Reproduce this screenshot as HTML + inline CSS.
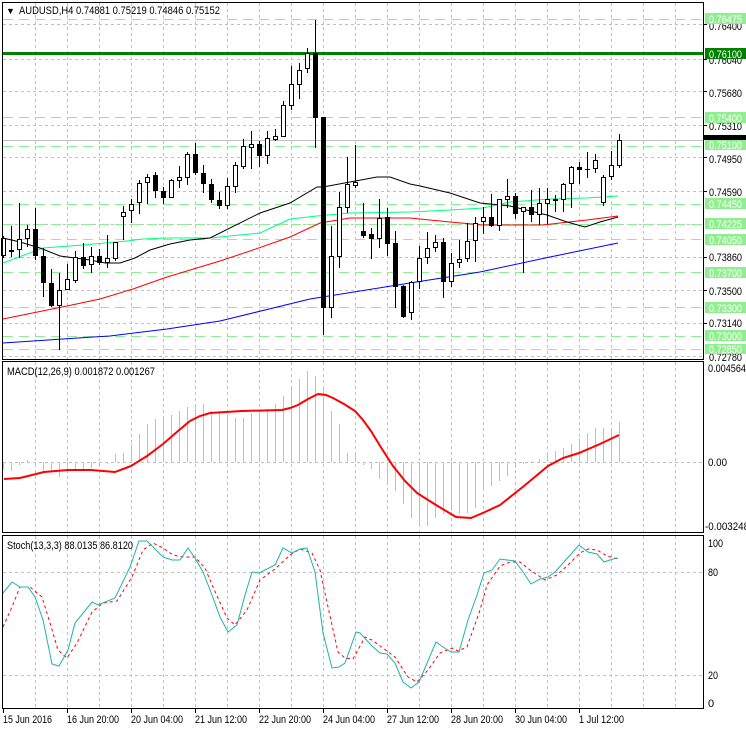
<!DOCTYPE html>
<html><head><meta charset="utf-8"><style>
html,body{margin:0;padding:0;background:#fff;}
svg{display:block;font-family:"Liberation Sans",Tahoma,sans-serif;font-size:11px;}
</style></head><body>
<svg width="746" height="731" viewBox="0 0 746 731" xmlns="http://www.w3.org/2000/svg" shape-rendering="crispEdges">
<rect width="746" height="731" fill="#fff"/>
<g stroke="#c0c0c0" stroke-dasharray="3,3" stroke-width="1">
<path d="M35.5 3V359M67.5 3V359M99.5 3V359M131.5 3V359M163.5 3V359M195.5 3V359M227.5 3V359M259.5 3V359M291.5 3V359M323.5 3V359M355.5 3V359M387.5 3V359M419.5 3V359M451.5 3V359M483.5 3V359M515.5 3V359M547.5 3V359M579.5 3V359M611.5 3V359M643.5 3V359M675.5 3V359"/>
<path d="M35.5 362V532M67.5 362V532M99.5 362V532M131.5 362V532M163.5 362V532M195.5 362V532M227.5 362V532M259.5 362V532M291.5 362V532M323.5 362V532M355.5 362V532M387.5 362V532M419.5 362V532M451.5 362V532M483.5 362V532M515.5 362V532M547.5 362V532M579.5 362V532M611.5 362V532M643.5 362V532M675.5 362V532"/>
<path d="M35.5 536V708M67.5 536V708M99.5 536V708M131.5 536V708M163.5 536V708M195.5 536V708M227.5 536V708M259.5 536V708M291.5 536V708M323.5 536V708M355.5 536V708M387.5 536V708M419.5 536V708M451.5 536V708M483.5 536V708M515.5 536V708M547.5 536V708M579.5 536V708M611.5 536V708M643.5 536V708M675.5 536V708"/>
<path d="M3 24.5H703M3 59.5H703M3 91.5H703M3 125.5H703M3 157.5H703M3 191.5H703M3 224.5H703M3 257.5H703M3 290.5H703M3 323.5H703M3 356.5H703"/>
<path d="M3 462.5H703M3 572.5H703M3 675.5H703"/>
</g>
<g stroke="#90ee90" stroke-dasharray="10,6" stroke-width="1">
<path d="M3 19.5H703M3 117.5H703M3 146.5H703M3 204.5H703M3 224.5H703M3 239.5H703M3 272.5H703M3 307.5H703M3 336.5H703M3 349.5H703"/>
</g>
<rect x="3" y="52" width="700" height="3" fill="#008000"/>
<rect x="3" y="140" width="700" height="1" fill="#c0c0c0"/>
<g fill="none" stroke-width="1" shape-rendering="auto">
<polyline stroke="#0000ff" points="3,343 93,337 110,336 167,329 220,321 310,299 410,283 480,272 550,257 618,243"/>
<polyline stroke="#ff0000" points="3,319 67,306 100,299 133,289 167,277 220,261 250,251 290,237 320,223 350,218 410,218 450,222 483,225 543,225 560,223 587,220 618,216"/>
<polyline stroke="#00ff7f" points="3,263 43,248 83,245 127,241 143,239 167,238 210,238 260,233 290,219 317,216 350,213 410,212 450,210 483,208 510,202 550,199 587,198 618,196"/>
<polyline stroke="#000" points="3,238 20,242 40,248 60,256 75,258 90,260 105,263 120,263 135,258 150,250 170,244 190,240 210,238 260,213 290,203 317,187 323,187 350,182 377,177 390,177 410,184 420,186 450,193 480,203 510,206 547,215 567,222 585,227 600,222 618,217"/>
</g>
<g fill="#000">
<rect x="3" y="236" width="1" height="22"/><rect x="1" y="238" width="5" height="18"/><rect x="2" y="239" width="3" height="16" fill="#fff"/>
<rect x="11" y="226" width="1" height="31"/><rect x="9" y="250" width="5" height="2"/>
<rect x="19" y="203" width="1" height="55"/><rect x="17" y="239" width="5" height="11"/><rect x="18" y="240" width="3" height="9" fill="#fff"/>
<rect x="27" y="225" width="1" height="22"/><rect x="25" y="229" width="5" height="10"/><rect x="26" y="230" width="3" height="8" fill="#fff"/>
<rect x="35" y="208" width="1" height="52"/><rect x="33" y="229" width="5" height="27"/>
<rect x="43" y="248" width="1" height="49"/><rect x="41" y="256" width="5" height="27"/>
<rect x="51" y="269" width="1" height="38"/><rect x="49" y="283" width="5" height="23"/>
<rect x="59" y="273" width="1" height="77"/><rect x="57" y="290" width="5" height="16"/><rect x="58" y="291" width="3" height="14" fill="#fff"/>
<rect x="67" y="264" width="1" height="26"/><rect x="65" y="279" width="5" height="11"/><rect x="66" y="280" width="3" height="9" fill="#fff"/>
<rect x="75" y="251" width="1" height="32"/><rect x="73" y="257" width="5" height="24"/><rect x="74" y="258" width="3" height="22" fill="#fff"/>
<rect x="83" y="243" width="1" height="26"/><rect x="81" y="257" width="5" height="9"/>
<rect x="91" y="247" width="1" height="26"/><rect x="89" y="256" width="5" height="9"/><rect x="90" y="257" width="3" height="7" fill="#fff"/>
<rect x="99" y="249" width="1" height="16"/><rect x="97" y="256" width="5" height="7"/>
<rect x="107" y="235" width="1" height="33"/><rect x="105" y="258" width="5" height="5"/><rect x="106" y="259" width="3" height="3" fill="#fff"/>
<rect x="115" y="242" width="1" height="19"/><rect x="113" y="242" width="5" height="17"/><rect x="114" y="243" width="3" height="15" fill="#fff"/>
<rect x="123" y="206" width="1" height="34"/><rect x="121" y="212" width="5" height="5"/><rect x="122" y="213" width="3" height="3" fill="#fff"/>
<rect x="131" y="199" width="1" height="24"/><rect x="129" y="204" width="5" height="7"/><rect x="130" y="205" width="3" height="5" fill="#fff"/>
<rect x="139" y="180" width="1" height="34"/><rect x="137" y="183" width="5" height="20"/><rect x="138" y="184" width="3" height="18" fill="#fff"/>
<rect x="147" y="174" width="1" height="30"/><rect x="145" y="177" width="5" height="6"/><rect x="146" y="178" width="3" height="4" fill="#fff"/>
<rect x="155" y="172" width="1" height="26"/><rect x="153" y="175" width="5" height="16"/>
<rect x="163" y="187" width="1" height="17"/><rect x="161" y="191" width="5" height="7"/>
<rect x="171" y="179" width="1" height="19"/><rect x="169" y="180" width="5" height="18"/><rect x="170" y="181" width="3" height="16" fill="#fff"/>
<rect x="179" y="166" width="1" height="22"/><rect x="177" y="177" width="5" height="4"/><rect x="178" y="178" width="3" height="2" fill="#fff"/>
<rect x="187" y="152" width="1" height="33"/><rect x="185" y="154" width="5" height="24"/><rect x="186" y="155" width="3" height="22" fill="#fff"/>
<rect x="195" y="143" width="1" height="32"/><rect x="193" y="154" width="5" height="19"/>
<rect x="203" y="165" width="1" height="28"/><rect x="201" y="173" width="5" height="11"/>
<rect x="211" y="179" width="1" height="24"/><rect x="209" y="184" width="5" height="16"/>
<rect x="219" y="192" width="1" height="17"/><rect x="217" y="200" width="5" height="6"/>
<rect x="227" y="178" width="1" height="31"/><rect x="225" y="186" width="5" height="20"/><rect x="226" y="187" width="3" height="18" fill="#fff"/>
<rect x="235" y="162" width="1" height="31"/><rect x="233" y="165" width="5" height="22"/><rect x="234" y="166" width="3" height="20" fill="#fff"/>
<rect x="243" y="139" width="1" height="30"/><rect x="241" y="146" width="5" height="21"/><rect x="242" y="147" width="3" height="19" fill="#fff"/>
<rect x="251" y="131" width="1" height="38"/><rect x="249" y="144" width="5" height="4"/><rect x="250" y="145" width="3" height="2" fill="#fff"/>
<rect x="259" y="141" width="1" height="26"/><rect x="257" y="144" width="5" height="12"/>
<rect x="267" y="131" width="1" height="33"/><rect x="265" y="138" width="5" height="18"/><rect x="266" y="139" width="3" height="16" fill="#fff"/>
<rect x="275" y="129" width="1" height="12"/><rect x="273" y="136" width="5" height="4"/><rect x="274" y="137" width="3" height="2" fill="#fff"/>
<rect x="283" y="101" width="1" height="36"/><rect x="281" y="105" width="5" height="32"/><rect x="282" y="106" width="3" height="30" fill="#fff"/>
<rect x="291" y="66" width="1" height="44"/><rect x="289" y="84" width="5" height="22"/><rect x="290" y="85" width="3" height="20" fill="#fff"/>
<rect x="299" y="63" width="1" height="36"/><rect x="297" y="70" width="5" height="15"/><rect x="298" y="71" width="3" height="13" fill="#fff"/>
<rect x="307" y="48" width="1" height="25"/><rect x="305" y="53" width="5" height="16"/><rect x="306" y="54" width="3" height="14" fill="#fff"/>
<rect x="315" y="20" width="1" height="128"/><rect x="313" y="53" width="5" height="65"/>
<rect x="323" y="117" width="1" height="218"/><rect x="321" y="117" width="5" height="191"/>
<rect x="331" y="226" width="1" height="92"/><rect x="329" y="256" width="5" height="52"/><rect x="330" y="257" width="3" height="50" fill="#fff"/>
<rect x="339" y="192" width="1" height="76"/><rect x="337" y="207" width="5" height="50"/><rect x="338" y="208" width="3" height="48" fill="#fff"/>
<rect x="347" y="157" width="1" height="56"/><rect x="345" y="184" width="5" height="24"/><rect x="346" y="185" width="3" height="22" fill="#fff"/>
<rect x="355" y="145" width="1" height="43"/><rect x="353" y="182" width="5" height="4"/><rect x="354" y="183" width="3" height="2" fill="#fff"/>
<rect x="363" y="203" width="1" height="35"/><rect x="361" y="231" width="5" height="5"/>
<rect x="371" y="228" width="1" height="31"/><rect x="369" y="234" width="5" height="5"/>
<rect x="379" y="199" width="1" height="49"/><rect x="377" y="218" width="5" height="21"/><rect x="378" y="219" width="3" height="19" fill="#fff"/>
<rect x="387" y="208" width="1" height="48"/><rect x="385" y="217" width="5" height="27"/>
<rect x="395" y="231" width="1" height="77"/><rect x="393" y="243" width="5" height="44"/>
<rect x="403" y="285" width="1" height="33"/><rect x="401" y="286" width="5" height="31"/>
<rect x="411" y="281" width="1" height="39"/><rect x="409" y="282" width="5" height="31"/><rect x="410" y="283" width="3" height="29" fill="#fff"/>
<rect x="419" y="246" width="1" height="43"/><rect x="417" y="258" width="5" height="24"/><rect x="418" y="259" width="3" height="22" fill="#fff"/>
<rect x="427" y="232" width="1" height="32"/><rect x="425" y="248" width="5" height="10"/><rect x="426" y="249" width="3" height="8" fill="#fff"/>
<rect x="435" y="235" width="1" height="17"/><rect x="433" y="242" width="5" height="6"/><rect x="434" y="243" width="3" height="4" fill="#fff"/>
<rect x="443" y="238" width="1" height="60"/><rect x="441" y="242" width="5" height="40"/>
<rect x="451" y="253" width="1" height="34"/><rect x="449" y="263" width="5" height="19"/><rect x="450" y="264" width="3" height="17" fill="#fff"/>
<rect x="459" y="240" width="1" height="28"/><rect x="457" y="259" width="5" height="4"/><rect x="458" y="260" width="3" height="2" fill="#fff"/>
<rect x="467" y="223" width="1" height="39"/><rect x="465" y="241" width="5" height="18"/><rect x="466" y="242" width="3" height="16" fill="#fff"/>
<rect x="475" y="217" width="1" height="45"/><rect x="473" y="223" width="5" height="18"/><rect x="474" y="224" width="3" height="16" fill="#fff"/>
<rect x="483" y="207" width="1" height="27"/><rect x="481" y="217" width="5" height="5"/><rect x="482" y="218" width="3" height="3" fill="#fff"/>
<rect x="491" y="194" width="1" height="33"/><rect x="489" y="217" width="5" height="9"/>
<rect x="499" y="199" width="1" height="32"/><rect x="497" y="199" width="5" height="27"/><rect x="498" y="200" width="3" height="25" fill="#fff"/>
<rect x="507" y="179" width="1" height="29"/><rect x="505" y="196" width="5" height="4"/><rect x="506" y="197" width="3" height="2" fill="#fff"/>
<rect x="515" y="193" width="1" height="26"/><rect x="513" y="196" width="5" height="18"/>
<rect x="523" y="207" width="1" height="66"/><rect x="521" y="207" width="5" height="5"/><rect x="522" y="208" width="3" height="3" fill="#fff"/>
<rect x="531" y="190" width="1" height="32"/><rect x="529" y="207" width="5" height="8"/>
<rect x="539" y="188" width="1" height="37"/><rect x="537" y="203" width="5" height="12"/><rect x="538" y="204" width="3" height="10" fill="#fff"/>
<rect x="547" y="188" width="1" height="36"/><rect x="545" y="199" width="5" height="5"/><rect x="546" y="200" width="3" height="3" fill="#fff"/>
<rect x="555" y="195" width="1" height="17"/><rect x="553" y="199" width="5" height="2"/>
<rect x="563" y="183" width="1" height="29"/><rect x="561" y="184" width="5" height="16"/><rect x="562" y="185" width="3" height="14" fill="#fff"/>
<rect x="571" y="166" width="1" height="42"/><rect x="569" y="167" width="5" height="17"/><rect x="570" y="168" width="3" height="15" fill="#fff"/>
<rect x="579" y="162" width="1" height="22"/><rect x="577" y="167" width="5" height="3"/>
<rect x="587" y="152" width="1" height="26"/><rect x="585" y="169" width="5" height="1"/>
<rect x="595" y="154" width="1" height="19"/><rect x="593" y="160" width="5" height="9"/><rect x="594" y="161" width="3" height="7" fill="#fff"/>
<rect x="603" y="175" width="1" height="31"/><rect x="601" y="177" width="5" height="26"/><rect x="602" y="178" width="3" height="24" fill="#fff"/>
<rect x="611" y="151" width="1" height="29"/><rect x="609" y="165" width="5" height="12"/><rect x="610" y="166" width="3" height="10" fill="#fff"/>
<rect x="619" y="134" width="1" height="34"/><rect x="617" y="140" width="5" height="26"/><rect x="618" y="141" width="3" height="24" fill="#fff"/>
</g>
<g fill="#c0c0c0">
<rect x="3" y="462" width="1" height="7"/><rect x="11" y="462" width="1" height="9"/><rect x="19" y="462" width="1" height="3"/><rect x="27" y="460" width="1" height="2"/><rect x="35" y="462" width="1" height="5"/><rect x="43" y="462" width="1" height="11"/><rect x="51" y="462" width="1" height="9"/><rect x="59" y="462" width="1" height="15"/><rect x="67" y="462" width="1" height="11"/><rect x="75" y="462" width="1" height="9"/>
<rect x="83" y="462" width="1" height="7"/><rect x="91" y="462" width="1" height="6"/><rect x="99" y="462" width="1" height="4"/><rect x="107" y="462" width="1" height="2"/><rect x="115" y="454" width="1" height="8"/><rect x="123" y="453" width="1" height="9"/><rect x="131" y="444" width="1" height="18"/><rect x="139" y="434" width="1" height="28"/><rect x="147" y="424" width="1" height="38"/><rect x="155" y="419" width="1" height="43"/>
<rect x="163" y="416" width="1" height="46"/><rect x="171" y="415" width="1" height="47"/><rect x="179" y="411" width="1" height="51"/><rect x="187" y="407" width="1" height="55"/><rect x="195" y="404" width="1" height="58"/><rect x="203" y="404" width="1" height="58"/><rect x="211" y="411" width="1" height="51"/><rect x="219" y="411" width="1" height="51"/><rect x="227" y="414" width="1" height="48"/><rect x="235" y="418" width="1" height="44"/>
<rect x="243" y="418" width="1" height="44"/><rect x="251" y="413" width="1" height="49"/><rect x="259" y="411" width="1" height="51"/><rect x="267" y="409" width="1" height="53"/><rect x="275" y="404" width="1" height="58"/><rect x="283" y="396" width="1" height="66"/><rect x="291" y="386" width="1" height="76"/><rect x="299" y="379" width="1" height="83"/><rect x="307" y="371" width="1" height="91"/><rect x="315" y="376" width="1" height="86"/>
<rect x="323" y="389" width="1" height="73"/><rect x="331" y="411" width="1" height="51"/><rect x="339" y="424" width="1" height="38"/><rect x="347" y="453" width="1" height="9"/><rect x="355" y="455" width="1" height="7"/><rect x="363" y="462" width="1" height="3"/><rect x="371" y="462" width="1" height="7"/><rect x="379" y="462" width="1" height="17"/><rect x="387" y="462" width="1" height="22"/><rect x="395" y="462" width="1" height="29"/>
<rect x="403" y="462" width="1" height="42"/><rect x="411" y="462" width="1" height="56"/><rect x="419" y="462" width="1" height="62"/><rect x="427" y="462" width="1" height="64"/><rect x="435" y="462" width="1" height="56"/><rect x="443" y="462" width="1" height="52"/><rect x="451" y="462" width="1" height="49"/><rect x="459" y="462" width="1" height="52"/><rect x="467" y="462" width="1" height="51"/><rect x="475" y="462" width="1" height="46"/>
<rect x="483" y="462" width="1" height="27"/><rect x="491" y="462" width="1" height="24"/><rect x="499" y="462" width="1" height="19"/><rect x="507" y="462" width="1" height="14"/><rect x="515" y="462" width="1" height="6"/><rect x="523" y="462" width="1" height="2"/><rect x="531" y="461" width="1" height="1"/><rect x="539" y="459" width="1" height="3"/><rect x="547" y="454" width="1" height="8"/><rect x="555" y="451" width="1" height="11"/>
<rect x="563" y="448" width="1" height="14"/><rect x="571" y="444" width="1" height="18"/><rect x="579" y="438" width="1" height="24"/><rect x="587" y="433" width="1" height="29"/><rect x="595" y="428" width="1" height="34"/><rect x="603" y="428" width="1" height="34"/><rect x="611" y="428" width="1" height="34"/><rect x="619" y="422" width="1" height="40"/>
</g>
<polyline shape-rendering="auto" fill="none" stroke="#ff0000" stroke-width="2" points="4,479 20,478 44,472 68,470 91,470 115,472 131,466 147,456 163,444 178,431 190,421 200,416 210,413 242,411 282,410 290,408 298,405 308,399 318,394 326,395 333,398 344,404 355,411 363,420 371,431 382,449 393,466 405,481 417,493 436,505 456,517 471,518 485,512 500,505 524,486 548,466 563,458 579,453 600,444 619,435"/>
<polyline shape-rendering="auto" fill="none" stroke="#ff0000" stroke-width="1" stroke-dasharray="3,3" points="3,627 12,607 20,587 30,587 42,597 50,623 58,650 67,658 77,643 92,612 103,603 117,601 132,577 143,550 153,543 163,548 173,555 182,557 195,557 205,568 213,587 227,618 235,625 247,610 260,580 275,569 290,555 300,549 312,553 320,570 328,607 338,652 345,658 353,659 365,637 372,640 387,651 395,657 408,677 417,682 428,670 440,653 452,648 458,651 467,647 480,610 487,585 500,566 510,562 520,562 530,570 545,580 557,575 570,563 580,553 588,549 597,550 607,556 618,559"/>
<polyline shape-rendering="auto" fill="none" stroke="#20b2aa" stroke-width="1" points="3,593 12,582 20,587 28,587 35,597 43,620 52,664 59,666 68,650 75,623 92,602 98,605 115,598 130,567 139,541 147,541 163,557 172,560 180,560 188,548 195,558 203,572 212,595 220,617 228,632 237,625 245,595 252,572 259,573 275,565 283,548 292,553 300,549 307,548 315,572 323,633 332,668 339,667 345,663 356,632 360,633 372,646 380,653 387,654 395,663 403,682 411,688 419,682 436,642 443,647 451,652 459,652 468,620 477,595 484,573 492,570 500,559 507,560 515,561 523,572 531,584 540,579 548,577 555,572 563,563 572,553 579,545 588,552 597,554 604,562 613,559 618,558"/>
<g fill="none" stroke="#000" stroke-width="1">
<rect x="2.5" y="2.5" width="701" height="357"/>
<rect x="2.5" y="361.5" width="701" height="171"/>
<rect x="2.5" y="535.5" width="701" height="173"/>
</g>
<g fill="#000"><rect x="704" y="24" width="3" height="1"/><rect x="704" y="59" width="3" height="1"/><rect x="704" y="91" width="3" height="1"/><rect x="704" y="125" width="3" height="1"/><rect x="704" y="157" width="3" height="1"/><rect x="704" y="191" width="3" height="1"/><rect x="704" y="257" width="3" height="1"/><rect x="704" y="290" width="3" height="1"/><rect x="704" y="323" width="3" height="1"/>
<rect x="3" y="709" width="1" height="4"/><rect x="67" y="709" width="1" height="4"/><rect x="131" y="709" width="1" height="4"/><rect x="195" y="709" width="1" height="4"/><rect x="259" y="709" width="1" height="4"/><rect x="323" y="709" width="1" height="4"/><rect x="387" y="709" width="1" height="4"/><rect x="451" y="709" width="1" height="4"/><rect x="515" y="709" width="1" height="4"/><rect x="579" y="709" width="1" height="4"/></g>
<g fill="#000" lengthAdjust="spacingAndGlyphs">
<text x="709" y="30" textLength="33" lengthAdjust="spacingAndGlyphs">0.76400</text>
<text x="709" y="64" textLength="33" lengthAdjust="spacingAndGlyphs">0.76040</text>
<text x="709" y="97" textLength="33" lengthAdjust="spacingAndGlyphs">0.75680</text>
<text x="709" y="130" textLength="33" lengthAdjust="spacingAndGlyphs">0.75310</text>
<text x="709" y="163" textLength="33" lengthAdjust="spacingAndGlyphs">0.74950</text>
<text x="709" y="196" textLength="33" lengthAdjust="spacingAndGlyphs">0.74590</text>
<text x="709" y="261" textLength="33" lengthAdjust="spacingAndGlyphs">0.73860</text>
<text x="709" y="295" textLength="33" lengthAdjust="spacingAndGlyphs">0.73500</text>
<text x="709" y="327" textLength="33" lengthAdjust="spacingAndGlyphs">0.73140</text>
<text x="709" y="361" textLength="33" lengthAdjust="spacingAndGlyphs">0.72780</text>
</g>
<g fill="#90ee90">
<rect x="705" y="13" width="41" height="11"/><rect x="705" y="112" width="41" height="11"/><rect x="705" y="140" width="41" height="10"/><rect x="705" y="198" width="41" height="11"/><rect x="705" y="218" width="41" height="11"/><rect x="705" y="234" width="41" height="11"/><rect x="705" y="267" width="41" height="11"/><rect x="705" y="302" width="41" height="11"/><rect x="705" y="330" width="41" height="11"/><rect x="705" y="344" width="41" height="10"/>
</g>
<rect x="705" y="48" width="41" height="11" fill="#008000"/>
<rect x="704" y="135" width="42" height="5" fill="#000"/>
<g fill="#fff">
<text x="709" y="23" textLength="33" lengthAdjust="spacingAndGlyphs">0.76475</text><text x="709" y="58" textLength="33" lengthAdjust="spacingAndGlyphs">0.76100</text><text x="709" y="122" textLength="33" lengthAdjust="spacingAndGlyphs">0.75400</text><text x="709" y="149" textLength="33" lengthAdjust="spacingAndGlyphs">0.75100</text><text x="709" y="208" textLength="33" lengthAdjust="spacingAndGlyphs">0.74450</text><text x="709" y="228" textLength="33" lengthAdjust="spacingAndGlyphs">0.74225</text><text x="709" y="244" textLength="33" lengthAdjust="spacingAndGlyphs">0.74050</text><text x="709" y="277" textLength="33" lengthAdjust="spacingAndGlyphs">0.73700</text><text x="709" y="312" textLength="33" lengthAdjust="spacingAndGlyphs">0.73300</text><text x="709" y="340" textLength="33" lengthAdjust="spacingAndGlyphs">0.73000</text><text x="709" y="353" textLength="33" lengthAdjust="spacingAndGlyphs">0.72850</text>
</g>
<g fill="#000">
<text x="708" y="372" textLength="38" lengthAdjust="spacingAndGlyphs">0.004564</text>
<text x="708" y="466" textLength="19" lengthAdjust="spacingAndGlyphs">0.00</text>
<text x="705" y="530" textLength="44" lengthAdjust="spacingAndGlyphs">-0.003248</text>
<text x="708" y="547" textLength="15" lengthAdjust="spacingAndGlyphs">100</text>
<text x="708" y="576" textLength="10" lengthAdjust="spacingAndGlyphs">80</text>
<text x="708" y="679" textLength="10" lengthAdjust="spacingAndGlyphs">20</text>
<text x="708" y="707">0</text>
<text x="6" y="14" font-size="9">&#9660;</text>
<text x="19" y="14" textLength="201" lengthAdjust="spacingAndGlyphs">AUDUSD,H4  0.74881 0.75219 0.74846 0.75152</text>
<text x="7" y="375" textLength="148" lengthAdjust="spacingAndGlyphs">MACD(12,26,9) 0.001872 0.001267</text>
<text x="7" y="549" textLength="126" lengthAdjust="spacingAndGlyphs">Stoch(13,3,3) 88.0135 86.8120</text>
<text x="3" y="723" textLength="49" lengthAdjust="spacingAndGlyphs">15 Jun 2016</text>
<text x="67" y="723" textLength="52" lengthAdjust="spacingAndGlyphs">16 Jun 20:00</text>
<text x="131" y="723" textLength="52" lengthAdjust="spacingAndGlyphs">20 Jun 04:00</text>
<text x="195" y="723" textLength="52" lengthAdjust="spacingAndGlyphs">21 Jun 12:00</text>
<text x="259" y="723" textLength="52" lengthAdjust="spacingAndGlyphs">22 Jun 20:00</text>
<text x="323" y="723" textLength="52" lengthAdjust="spacingAndGlyphs">24 Jun 04:00</text>
<text x="387" y="723" textLength="52" lengthAdjust="spacingAndGlyphs">27 Jun 12:00</text>
<text x="451" y="723" textLength="52" lengthAdjust="spacingAndGlyphs">28 Jun 20:00</text>
<text x="515" y="723" textLength="52" lengthAdjust="spacingAndGlyphs">30 Jun 04:00</text>
<text x="579" y="723" textLength="45" lengthAdjust="spacingAndGlyphs">1 Jul 12:00</text>
</g>
</svg>
</body></html>
